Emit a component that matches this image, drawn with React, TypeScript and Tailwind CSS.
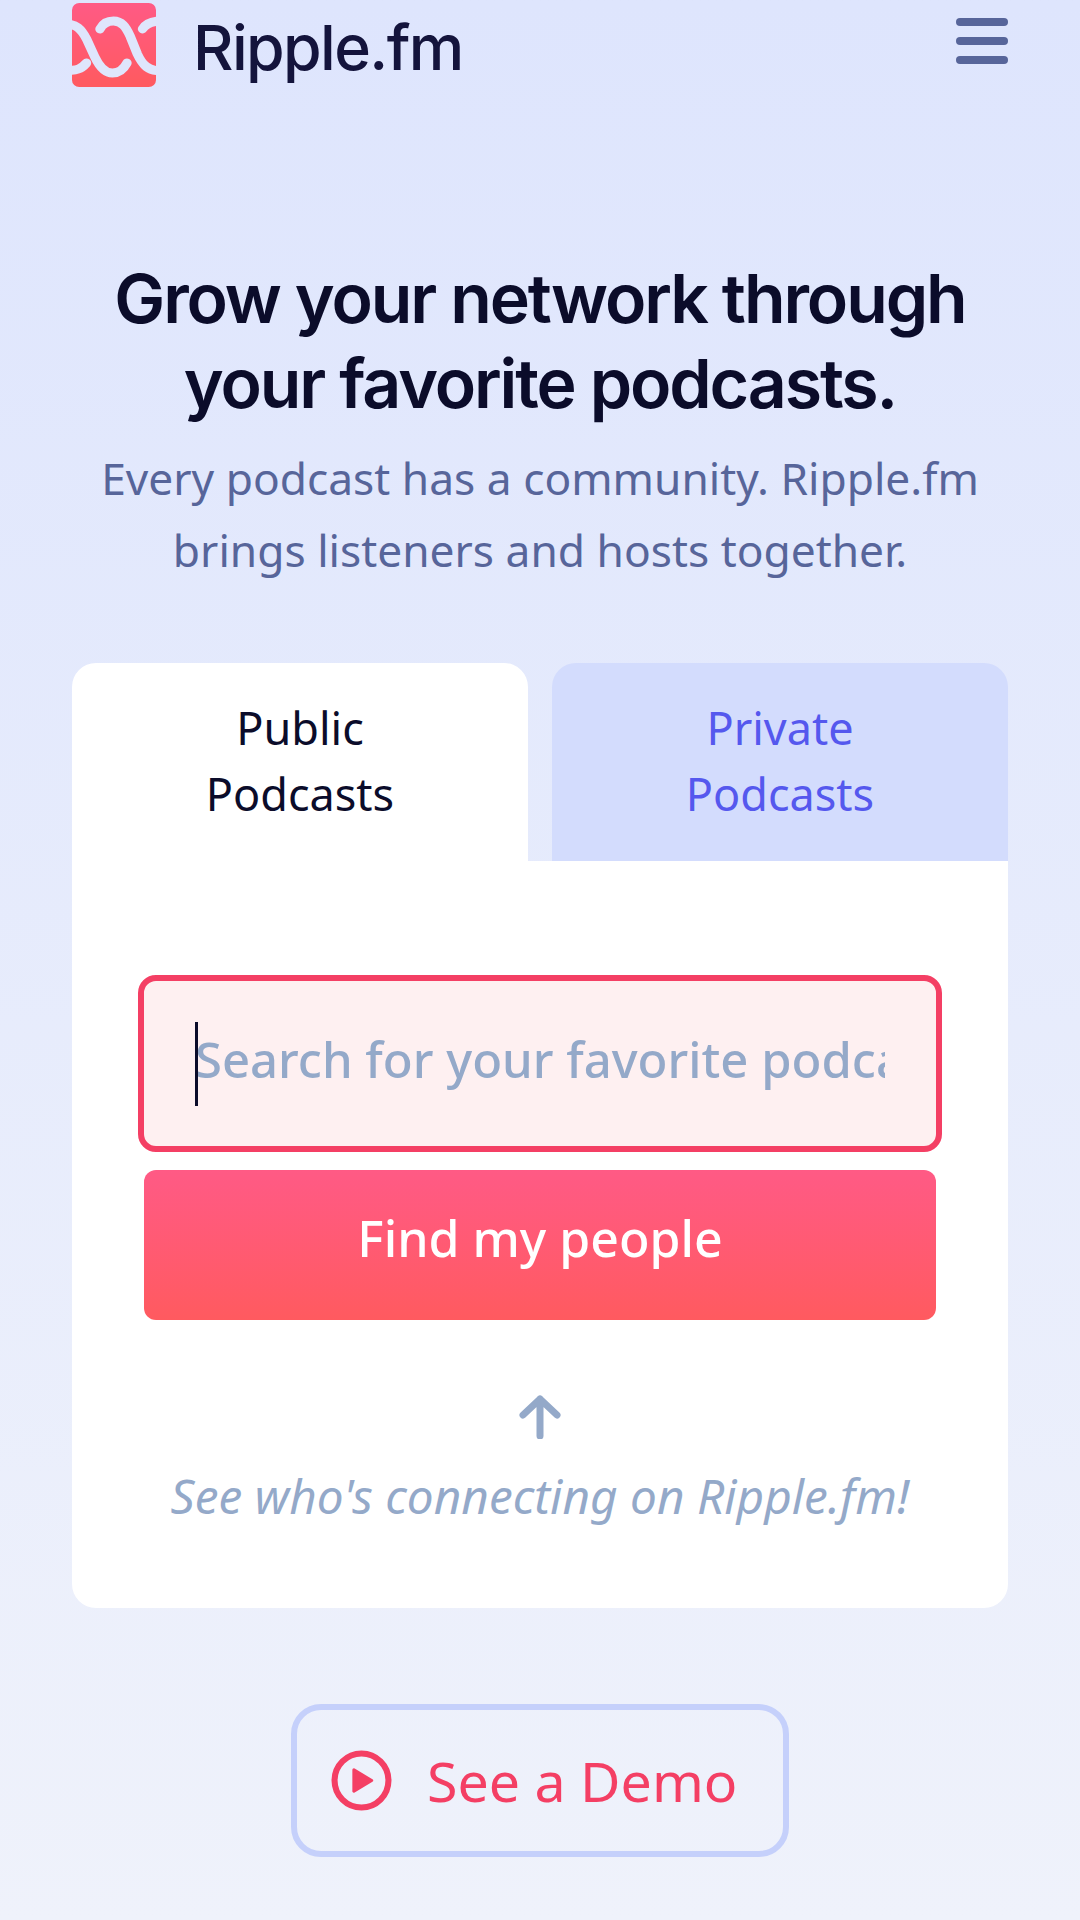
import { useState } from "react";

const body = "font-['Noto_Sans',sans-serif]";

function Logo() {
  return (
    <svg width="84" height="84" viewBox="0 0 81 84" preserveAspectRatio="none" fill="none">
      <defs>
        <linearGradient id="logo-fill" x1="0" y1="0" x2="0" y2="1">
          <stop offset="0" stopColor="#ff5a85" />
          <stop offset="1" stopColor="#ff5a5f" />
        </linearGradient>
        <clipPath id="logo-clip">
          <rect width="81" height="84" rx="7" />
        </clipPath>
      </defs>
      <g clipPath="url(#logo-clip)">
        <rect width="81" height="84" fill="url(#logo-fill)" />
        <g stroke="#dfe6fc" strokeWidth="9" strokeLinecap="round">
          <path d="M-6 21C4 21 9 26 14 36L22 54C27 65 32 70 39 70C46 70 50 66 53 60" />
          <path d="M27 26C30 20 34 18 40 18C48 18 52 24 56 33L63 51C68 62 73 68 87 68" />
          <path d="M-6 67C4 68 9 66 14 60" />
          <path d="M68 26C71 21 76 18 87 18" />
        </g>
      </g>
    </svg>
  );
}

function PlayIcon() {
  return (
    <svg width="61" height="61" viewBox="0 0 60 60" fill="none">
      <circle cx="30" cy="30" r="26.5" stroke="#f43f64" strokeWidth="6" />
      <path d="M22.5 19.5L40 30L22.5 40.5Z" fill="#f43f64" stroke="#f43f64" strokeWidth="3" strokeLinejoin="round" />
    </svg>
  );
}

export default function App() {
  const [tab, setTab] = useState<"public" | "private">("public");

  return (
    <div className={`${body} min-h-[1920px] bg-gradient-to-b from-[#dee5fd] to-[#eff2fb] px-[72px]`}>
      <header className="flex h-[90px] items-start justify-between pt-[3px]">
        <div className="flex items-start gap-[37px]">
          <Logo />
          <span className="-mt-[1px] font-['Inter',sans-serif] text-[62.5px] leading-[90px] font-medium tracking-[-1.6px] text-[#14143c]">
            Ripple.fm
          </span>
        </div>
        <button type="button" aria-label="Menu" className="mt-[15px] flex w-[52px] flex-col gap-[11px]">
          <span className="h-[8px] rounded-full bg-[#57659a]" />
          <span className="h-[8px] rounded-full bg-[#57659a]" />
          <span className="h-[8px] rounded-full bg-[#57659a]" />
        </button>
      </header>

      <h1 className="mt-[166px] text-center font-['Inter',sans-serif] text-[68px] leading-[85px] font-semibold tracking-[-2.1px] text-[#0b0c2a]">
        Grow your network through
        <br />
        your favorite podcasts.
      </h1>
      <p className="mt-[16px] text-center text-[44.3px] leading-[72px] text-[#57659a]">
        Every podcast has a community. Ripple.fm
        <br />
        brings listeners and hosts together.
      </p>

      <section className="mt-[77px]">
        <div className="grid grid-cols-2 gap-[24px]">
          <button
            type="button"
            onClick={() => setTab("public")}
            className={`h-[198px] rounded-t-[24px] pb-[3px] text-[45px] leading-[66px] ${tab === "public" ? "bg-white text-[#0b0c2a]" : "bg-[#d3dcfd] text-[#5558ee]"}`}
          >
            Public
            <br />
            Podcasts
          </button>
          <button
            type="button"
            onClick={() => setTab("private")}
            className={`h-[198px] rounded-t-[24px] pb-[3px] text-[45px] leading-[66px] ${tab === "private" ? "bg-white text-[#0b0c2a]" : "bg-[#d3dcfd] text-[#5558ee]"}`}
          >
            Private
            <br />
            Podcasts
          </button>
        </div>

        <div className="flex h-[747px] flex-col items-center rounded-b-[24px] bg-white px-[66px] pt-[114px]">
          <div className="relative h-[177px] w-full rounded-[18px] border-[6px] border-[#f43f64] bg-[#fef0f1]">
            <input
              type="text"
              placeholder="Search for your favorite podcast"
              className="h-full w-full px-[51px] pb-[10px] text-[49px] font-medium text-[#0b0c2a] outline-none placeholder:text-[#94a9c9]"
            />
            <span className="absolute top-[41px] left-[51px] h-[84px] w-[3px] bg-[#0b0c2a]" />
          </div>
          <button
            type="button"
            className="mt-[18px] h-[150px] w-[792px] rounded-[12px] bg-gradient-to-b from-[#ff5a85] to-[#ff5a5f] pb-[14px] text-[50px] font-medium text-white"
          >
            Find my people
          </button>
          <svg className="mt-[75px]" width="42" height="44" viewBox="0 0 42 44" fill="none">
            <path d="M21 41V4M4 20L21 4L38 20" stroke="#94a9c9" strokeWidth="7" strokeLinecap="round" strokeLinejoin="round" />
          </svg>
          <p className="mt-[24px] text-[47.7px] leading-[66px] text-[#94a9c9] italic">See who's connecting on Ripple.fm!</p>
        </div>
      </section>

      <div className="mt-[96px] flex justify-center">
        <button
          type="button"
          className="flex h-[153px] w-[498px] items-center gap-[35px] rounded-[30px] border-[6px] border-[#c5d0fb] pl-[34px] text-[55.5px] text-[#f43f64]"
        >
          <PlayIcon />
          See a Demo
        </button>
      </div>
    </div>
  );
}
